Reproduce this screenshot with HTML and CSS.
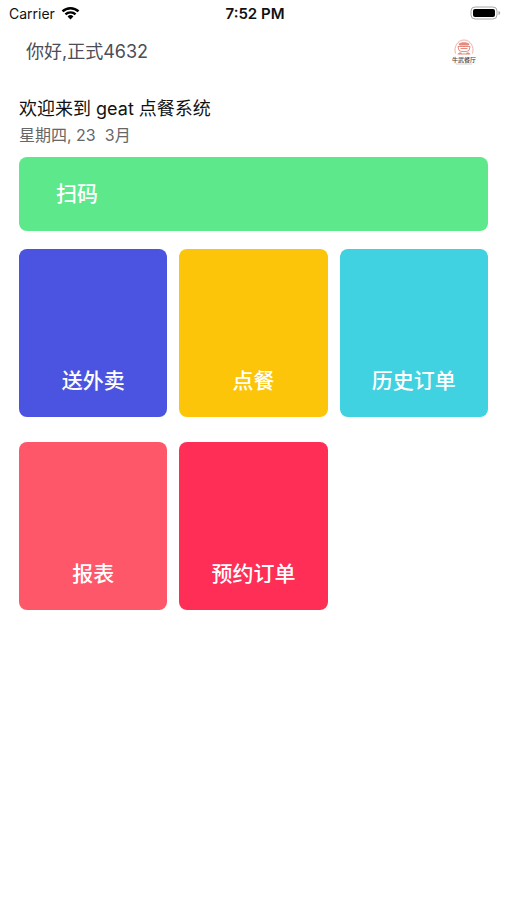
FILE: index.html
```html
<!DOCTYPE html>
<html lang="zh-CN">
<head>
    <meta charset="UTF-8">
    <meta name="viewport" content="width=device-width, initial-scale=1.0">
    <title>geat 点餐系统</title>
    <link rel="stylesheet" href="styles.css">
</head>
<body>
    <div class="status-bar">
        <div class="carrier">
            <span>Carrier</span>
            <svg class="wifi" viewBox="0 0 20 14" aria-hidden="true">
                <path d="M1.6 5.4a12 12 0 0 1 16.8 0" />
                <path d="M4.7 8.5a7.6 7.6 0 0 1 10.6 0" />
                <path class="wifi-dot" d="M10 13.8 6.9 10.7a4.4 4.4 0 0 1 6.2 0z" />
            </svg>
        </div>
        <time class="clock">7:52 PM</time>
        <svg class="battery" viewBox="0 0 31 14" aria-hidden="true">
            <rect class="battery-case" x="1" y="1" width="26" height="12" rx="4" />
            <rect x="3" y="3" width="22" height="8" rx="2" />
            <path class="battery-cap" d="M28.5 5v4c1-.3 1.700-1.100 1.700-2s-.7-1.700-1.700-2z" />
        </svg>
    </div>

    <header class="header">
        <p class="greeting">你好,正式4632</p>
        <svg class="logo" viewBox="0 0 26 28" aria-hidden="true">
            <g class="logo-mark">
                <path class="logo-ring" d="M4.500 15.500C2.500 9 6.500 2 13 2S23.500 9 21.500 15.500" />
                <path class="logo-fill" d="M7.500 6c2-2.500 9-2.500 11 0l-1 1.500h-9z" />
                <path d="M7 8.500h12l-1 4c-2 1.500-8 1.500-10 0z" />
                <path d="M9.500 10.500h7" />
                <path class="logo-fill" d="M6.500 16.500c1-2.500 4-2.500 4.500-1h4c.5-1.500 3.500-1.500 4.500 1z" />
            </g>
            <text class="logo-name" x="13" y="24" text-anchor="middle">牛武餐厅</text>
            <path class="logo-line" d="M5 26h16" />
        </svg>
    </header>

    <main class="container">
        <h1 class="welcome">欢迎来到 geat 点餐系统</h1>
        <p class="date">星期四, 23&nbsp; 3月</p>

        <button type="button" class="scan">扫码</button>

        <nav class="menu-grid">
            <button type="button" class="card card-delivery">送外卖</button>
            <button type="button" class="card card-order">点餐</button>
            <button type="button" class="card card-history">历史订单</button>
            <button type="button" class="card card-report">报表</button>
            <button type="button" class="card card-booking">预约订单</button>
        </nav>
    </main>
</body>
</html>
```

FILE: styles.css
```css
* {
    margin: 0;
    padding: 0;
    box-sizing: border-box;
}

:root {
    --scan: #5de88b;
    --delivery: #4b54e0;
    --order: #fdc50a;
    --history: #40d2e0;
    --report: #ff576a;
    --booking: #ff2e56;
    --text-primary: #111111;
    --text-greeting: #4b4d57;
    --text-secondary: #666666;
}

body {
    font-family: Inter, 'Noto Sans CJK SC', sans-serif;
    background: #ffffff;
    color: var(--text-primary);
    min-height: 100vh;
}

button {
    border: 0;
    color: #ffffff;
    font-family: inherit;
    font-size: 21px;
    font-weight: 500;
    line-height: 30px;
    cursor: pointer;
}

.status-bar {
    display: grid;
    grid-template-columns: 1fr auto 1fr;
    align-items: center;
    height: 26px;
    padding: 0 6px 0 9px;
    font-size: 14px;
}

.carrier {
    display: flex;
    align-items: center;
    gap: 6px;
}

.wifi {
    width: 19px;
    height: 14px;
    fill: none;
    stroke: #000000;
    stroke-width: 2.6;
}

.wifi-dot {
    fill: #000000;
    stroke: none;
}

.clock {
    font-size: 15px;
    font-weight: 600;
}

.battery {
    justify-self: end;
    width: 31px;
    height: 14px;
}

.battery-case {
    fill: none;
    stroke: #a8a8a8;
}

.battery-cap {
    fill: #a8a8a8;
}

.header {
    display: flex;
    align-items: center;
    justify-content: space-between;
    height: 52px;
    padding: 0 30px 0 26px;
}

.greeting {
    color: var(--text-greeting);
    font-size: 18px;
    line-height: 26px;
}

.logo {
    width: 26px;
    height: 28px;
}

.logo-mark {
    fill: none;
    stroke: #e58a7e;
    stroke-width: 1;
}

.logo-mark .logo-ring {
    stroke: #efb0a8;
}

.logo-mark .logo-fill {
    fill: #e58a7e;
    stroke: none;
}

.logo-name {
    fill: #444444;
    font-size: 6px;
    font-weight: 500;
}

.logo-line {
    stroke: #d0d0d0;
    stroke-width: 1;
}

.container {
    padding: 17px 19px;
}

.welcome {
    font-size: 18px;
    font-weight: 400;
    line-height: 28px;
}

.date {
    margin-bottom: 10px;
    color: var(--text-secondary);
    font-size: 16px;
    line-height: 24px;
}

.scan {
    display: block;
    width: 100%;
    margin-bottom: 18px;
    padding: 22px 37px;
    border-radius: 8px;
    background: var(--scan);
    text-align: left;
}

.menu-grid {
    display: grid;
    grid-template-columns: repeat(3, 1fr);
    gap: 25px 12px;
}

.card {
    display: flex;
    align-items: flex-end;
    justify-content: center;
    height: 168px;
    padding-bottom: 21px;
    border-radius: 8px;
}

.card-delivery {
    background: var(--delivery);
}

.card-order {
    background: var(--order);
}

.card-history {
    background: var(--history);
}

.card-report {
    background: var(--report);
}

.card-booking {
    background: var(--booking);
}
```
